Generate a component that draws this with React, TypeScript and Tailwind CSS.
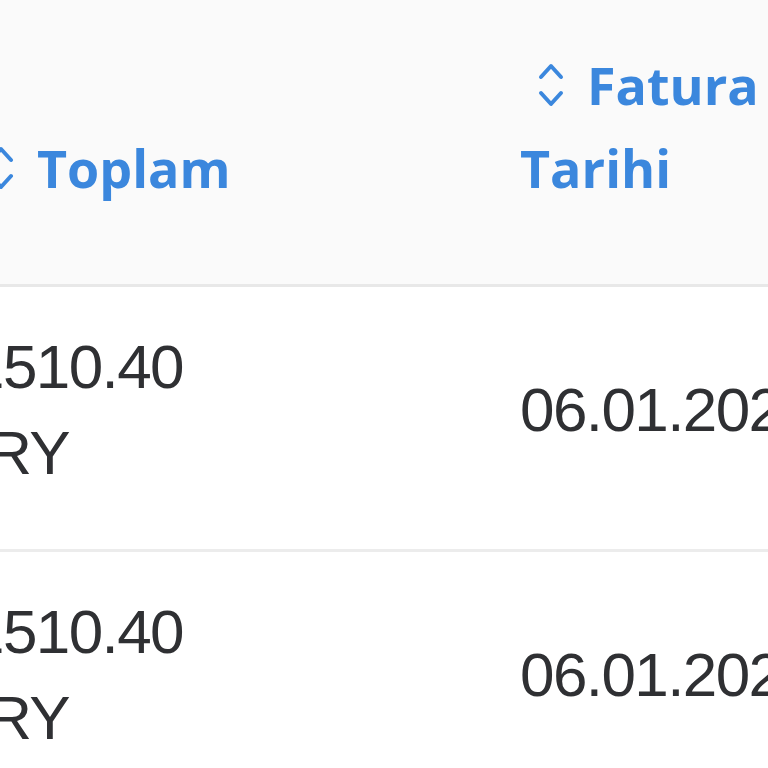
import React from 'react';

type Row = { amount: string; currency: string; date: string };

const rows: Row[] = [
  { amount: '1510.40', currency: 'TRY', date: '06.01.2025' },
  { amount: '1510.40', currency: 'TRY', date: '06.01.2025' },
];

function SortIcon() {
  return (
    <svg
      viewBox="0 0 28 50"
      className="inline-block w-[28px] h-[50px] shrink-0"
      fill="none"
      stroke="currentColor"
      strokeWidth={4}
      strokeLinecap="round"
      strokeLinejoin="round"
    >
      <path d="M4 17 L14 6 L24 17" />
      <path d="M4 33 L14 44 L24 33" />
    </svg>
  );
}

function HeaderLabel({ children }: { children: React.ReactNode }) {
  return (
    <div className="font-['Open_Sans',sans-serif] text-[52px] leading-[83px] font-bold text-[#3b87dd]">
      <span className="inline-flex items-center align-top h-[83px] ml-[17px] mr-[22px]">
        <SortIcon />
      </span>
      {children}
    </div>
  );
}

export default function App() {
  return (
    <div className="w-[768px] h-[768px] overflow-hidden bg-white font-['Liberation_Sans',Arial,sans-serif]">
      <div className="-ml-[111px] w-[1400px]">
        <div className="grid grid-cols-[567px_500px] h-[287px] bg-[#fafafa] border-b-[3px] border-[#e8e8e8]">
          <div className="pl-[81px] pb-[75px] flex items-end">
            <HeaderLabel>Toplam</HeaderLabel>
          </div>
          <div className="pl-[64px] pb-[75px] flex items-end w-[330px]">
            <HeaderLabel>Fatura Tarihi</HeaderLabel>
          </div>
        </div>

        {rows.map((row, i) => (
          <div
            key={i}
            className="grid grid-cols-[567px_500px] h-[265px] border-b-[3px] border-[#ececec] items-center text-[#2f3033] text-[62px] leading-[86px] tracking-[-1.6px]"
          >
            <div className="pl-[81px] pb-[16px]">
              <div className="w-[270px]">
                <span>{row.amount}</span> <span className="-ml-[19px]">{row.currency}</span>
              </div>
            </div>
            <div className="pl-[64px] pb-[16px] whitespace-nowrap">{row.date}</div>
          </div>
        ))}
      </div>
    </div>
  );
}
